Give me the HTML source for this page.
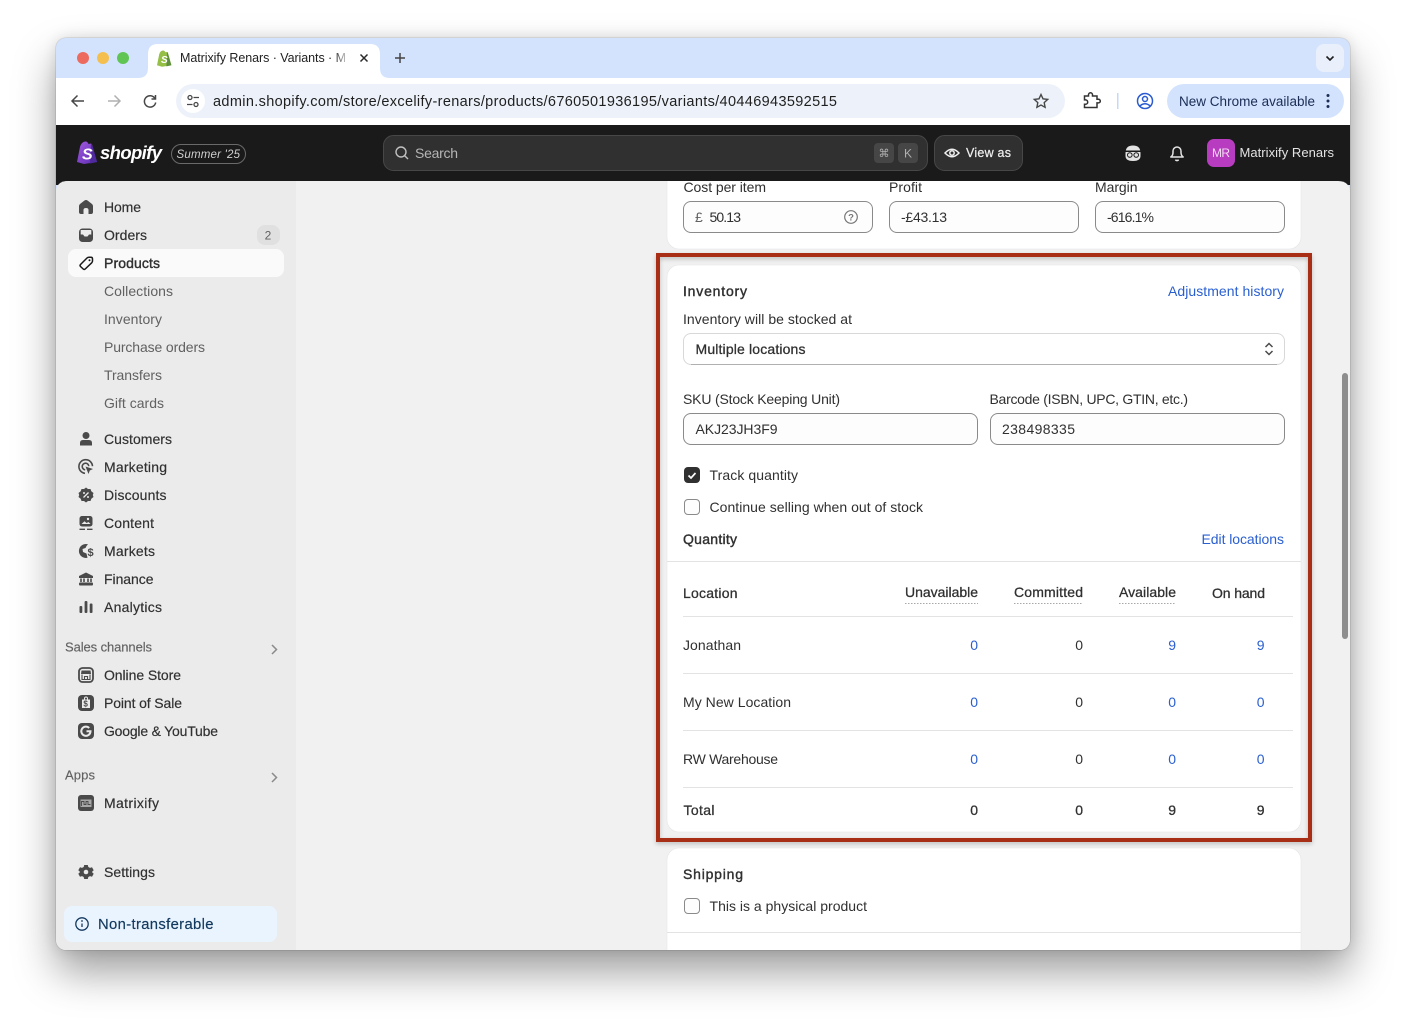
<!DOCTYPE html>
<html lang="en">
<head>
<meta charset="utf-8">
<title>Matrixify Renars · Variants</title>
<style>
html,body{margin:0;padding:0;background:#fff;width:1406px;height:1024px;overflow:hidden}
#win{position:absolute;left:56px;top:38px;width:1294px;height:912px;border-radius:10px;background:#d3e3fd;box-shadow:0 22px 42px rgba(0,0,0,.38),0 0 14px rgba(0,0,0,.12),0 0 1px rgba(0,0,0,.5)}
svg{position:absolute;left:0;top:0;display:block}
text{font-family:"Liberation Sans",sans-serif;font-size:14px;fill:#303030}
.m{stroke:#303030;stroke-width:.28px}
.nav{fill:#303030;stroke:#303030;stroke-width:.18px}
.sub{fill:#616161}
.sec{fill:#616161;font-size:13px;stroke:#616161;stroke-width:.15px}
.l{fill:#2a5fd0}
.h{stroke:#303030;stroke-width:.4px}
.i{fill:#4a4a4a}
.in{fill:#fdfdfd;stroke:#8a8a8a;stroke-width:1}
.d{stroke:#e3e3e3;stroke-width:1}
.n{text-anchor:end}
</style>
</head>
<body>
<div id="win"></div>
<svg width="1406" height="1024" viewBox="0 0 1406 1024" xmlns="http://www.w3.org/2000/svg">
<defs>
<clipPath id="w"><rect x="56" y="38" width="1294" height="912" rx="10"/></clipPath>
<clipPath id="main"><path d="M56 950V193Q56 181 68 181H1338Q1350 181 1350 193V950Z"/></clipPath>
<linearGradient id="fade" x1="0" x2="1"><stop offset="0" stop-color="#fff" stop-opacity="0"/><stop offset="1" stop-color="#fff"/></linearGradient>
<linearGradient id="purple" x1="0" y1="0" x2="1" y2="1"><stop offset="0" stop-color="#a45be0"/><stop offset="1" stop-color="#5a2ab0"/></linearGradient>
<filter id="sh" x="-5%" y="-5%" width="110%" height="110%"><feDropShadow dx="0" dy="2" stdDeviation="2" flood-color="#000" flood-opacity=".22"/></filter>
</defs>
<g clip-path="url(#w)">
<!-- tab strip -->
<rect x="56" y="38" width="1294" height="40" fill="#d3e3fd"/>
<circle cx="83" cy="58" r="6" fill="#ec6a5e"/><circle cx="103" cy="58" r="6" fill="#f4bf4f"/><circle cx="123" cy="58" r="6" fill="#61c554"/>
<rect x="56" y="78" width="1294" height="47" fill="#fff"/>
<path d="M138 78Q148 78 148 68V54Q148 44 158 44H370Q380 44 380 54V68Q380 78 390 78Z" fill="#fff"/>
<g transform="translate(157,50.500) scale(.72)">
<path d="M3 5.500C4 2 6 0 8.500 0C10 0 11 1 11.500 2.500L14 2L15 3L20 20.500L7 22.500L0 20.500Z" fill="#95bf47"/>
<path d="M14 2L15 3L20 20.500L13 22Z" fill="#5e8e3e"/>
<text x="5.500" y="17.500" style="font-size:14px;font-weight:bold;font-style:italic;fill:#fff">S</text>
</g>
<text x="180" y="62" textLength="166" style="font-size:12.500px;fill:#1f1f1f">Matrixify Renars · Variants · M</text>
<rect x="334" y="46" width="16" height="28" fill="url(#fade)"/>
<path d="M360.500 54.500l7 7m0-7l-7 7" stroke="#2b2b2b" stroke-width="1.500" fill="none"/>
<path d="M395 58h10M400 53v10" stroke="#444" stroke-width="1.500" fill="none"/>
<rect x="1316" y="44" width="28" height="28" rx="8" fill="#e9f0fc"/>
<path d="M1326.500 56.500l3.500 3.500l3.500-3.500" stroke="#1f1f1f" stroke-width="1.600" fill="none"/>
<!-- toolbar -->
<path d="M84 101H72.500M77.500 95.500L72 101l5.500 5.500" stroke="#474747" stroke-width="1.500" fill="none"/>
<path d="M108 101H119.500M114.500 95.500L120 101l-5.500 5.500" stroke="#b0b0b0" stroke-width="1.500" fill="none"/>
<path d="M155 98.500A5.700 5.700 0 1 0 155.700 102.500M155.500 95v4h-4" stroke="#474747" stroke-width="1.500" fill="none"/>
<rect x="176" y="84" width="889" height="34" rx="17" fill="#edf2fa"/>
<circle cx="193" cy="101" r="12" fill="#fff"/>
<g stroke="#474747" stroke-width="1.300" fill="none"><circle cx="190" cy="97.500" r="2"/><path d="M193.500 97.500H199M187 104.500H192.500"/><circle cx="196" cy="104.500" r="2"/></g>
<text x="213" y="106" textLength="624" style="font-size:14.500px;fill:#1f1f1f">admin.shopify.com/store/excelify-renars/products/6760501936195/variants/40446943592515</text>
<path d="M1041 94.500l2 4.300 4.700.6-3.500 3.200 .9 4.700-4.100-2.300-4.100 2.300 .9-4.700-3.500-3.200 4.700-.6z" fill="none" stroke="#474747" stroke-width="1.400"/>
<path d="M1084.500 96h4v-1.200a2 2 0 0 1 4 0V96h4.500v3.300h1.500a1.800 1.800 0 0 1 0 3.600H1097v4.600h-12.500v-3.200h1a2 2 0 0 0 0-4.400h-1z" fill="none" stroke="#333" stroke-width="1.500"/>
<rect x="1117" y="93" width="1.500" height="16" fill="#c6d8f4"/>
<g stroke="#2a5bd0" stroke-width="1.500" fill="none"><circle cx="1145" cy="101" r="7.500"/><circle cx="1145" cy="99" r="2.500"/><path d="M1139.800 106q5.200-4.500 10.400 0"/></g>
<rect x="1167" y="84" width="177" height="34" rx="17" fill="#d3e3fd"/>
<text x="1179" y="106" textLength="136" style="font-size:13.500px;fill:#1a2d55">New Chrome available</text>
<g fill="#1a2d55"><circle cx="1328" cy="95.500" r="1.500"/><circle cx="1328" cy="101" r="1.500"/><circle cx="1328" cy="106.500" r="1.500"/></g>
<!-- header -->
<rect x="56" y="125" width="1294" height="60" fill="#1a1a1a"/>
<g transform="translate(77,141.500)">
<path d="M3 5.500C4 2 6 0 8.500 0C10 0 11 1 11.500 2.500L14 2L15 3L20 20.500L7 22.500L0 20.500Z" fill="url(#purple)"/>
<path d="M14 2L15 3L20 20.500L13 22Z" fill="#4f2a9e"/>
<text x="5" y="18" style="font-size:16px;font-weight:bold;font-style:italic;fill:#fff">S</text>
</g>
<text x="100" y="159" textLength="62" style="font-size:18.500px;font-weight:bold;font-style:italic;fill:#fff">shopify</text>
<rect x="171.500" y="144.500" width="74" height="19" rx="9.500" fill="none" stroke="#6a6a6a"/>
<text x="176.500" y="158" textLength="63.500" style="font-size:11.500px;font-style:italic;fill:#d0d0d0">Summer '25</text>
<rect x="383.500" y="135.500" width="544" height="35" rx="10" fill="#303030" stroke="#474747"/>
<g stroke="#c0c0c0" stroke-width="1.400" fill="none"><circle cx="401" cy="152" r="5"/><path d="M404.700 155.700l3.300 3.300"/></g>
<text x="415" y="158" textLength="43" style="font-size:14px;fill:#b5b5b5">Search</text>
<rect x="874" y="143" width="20" height="20" rx="4" fill="#464646"/><rect x="898" y="143" width="20" height="20" rx="4" fill="#464646"/>
<text x="884" y="157" text-anchor="middle" style="font-size:11px;fill:#b0b0b0;font-family:'DejaVu Sans',sans-serif">⌘</text>
<text x="908" y="157.500" text-anchor="middle" style="font-size:12px;fill:#b0b0b0">K</text>
<rect x="934.500" y="135.500" width="88" height="35" rx="10" fill="#303030" stroke="#474747"/>
<g stroke="#f0f0f0" stroke-width="1.500" fill="none"><path d="M945 153q7-7.500 14 0q-7 7.500-14 0z"/><circle cx="952" cy="153" r="2.200"/></g>
<text x="966" y="157" textLength="45" style="font-size:12.500px;fill:#f0f0f0;stroke:#f0f0f0;stroke-width:.2px">View as</text>
<g>
<path d="M1125.500 153q0-7.500 7.500-7.500t7.500 7.500v3q0 5-7.500 5t-7.500-5z" fill="#e3e3e3"/>
<rect x="1125.500" y="150.500" width="15" height="1.500" fill="#1a1a1a"/>
<circle cx="1129.800" cy="155" r="2.300" fill="#e3e3e3" stroke="#1a1a1a" stroke-width="1"/><circle cx="1136.200" cy="155" r="2.300" fill="#e3e3e3" stroke="#1a1a1a" stroke-width="1"/>
</g>
<g fill="none" stroke="#e3e3e3" stroke-width="1.500"><path d="M1170.800 157q2.200-1.500 2.200-4.500v-1.500a4 4 0 0 1 8 0v1.500q0 3 2.200 4.500z" stroke-linejoin="round"/><path d="M1175.300 159.800q1.700 1.500 3.400 0"/></g>
<rect x="1207" y="139" width="28" height="28" rx="7" fill="#b83cbf"/>
<text x="1212" y="157" textLength="18" style="font-size:12px;fill:#f3d9f4">MR</text>
<text x="1239.500" y="157" textLength="94.500" style="font-size:13px;fill:#e3e3e3">Matrixify Renars</text>
<!-- main -->
<g clip-path="url(#main)">
<rect x="56" y="181" width="1294" height="769" fill="#f1f1f1"/>
<rect x="56" y="181" width="240" height="769" fill="#ebebeb"/>
<!-- content cards -->
<rect x="667" y="150" width="634" height="99" rx="12" fill="#fff" stroke="#e6e6e6" stroke-width=".6"/>
<text x="683.500" y="192" textLength="82.500">Cost per item</text>
<text x="889" y="192" textLength="33">Profit</text>
<text x="1095" y="192" textLength="42.500">Margin</text>
<rect class="in" x="683.500" y="201.500" width="189" height="31" rx="7.500"/>
<rect class="in" x="889.500" y="201.500" width="189" height="31" rx="7.500"/>
<rect class="in" x="1095.500" y="201.500" width="189" height="31" rx="7.500"/>
<text x="695" y="222" style="fill:#616161">£</text>
<text x="709.500" y="222" textLength="31.500">50.13</text>
<g fill="none" stroke="#777" stroke-width="1.200"><circle cx="851" cy="217" r="6.300"/></g>
<text x="851" y="220.500" text-anchor="middle" style="font-size:9.500px;fill:#777;font-weight:bold">?</text>
<text x="901" y="222" textLength="46">-£43.13</text>
<text x="1107" y="222" textLength="47">-616.1%</text>
<!-- highlight frame -->
<rect x="658" y="255" width="652" height="585" fill="none" stroke="#a82d19" stroke-width="4" filter="url(#sh)"/>
<!-- inventory card -->
<rect x="667" y="265" width="634" height="567" rx="12" fill="#fff" stroke="#e6e6e6" stroke-width=".6"/>
<text class="h" x="683" y="296" textLength="64">Inventory</text>
<text class="l" x="1168" y="296" textLength="116">Adjustment history</text>
<text x="683" y="324" textLength="169">Inventory will be stocked at</text>
<rect x="683.500" y="333.500" width="601" height="31" rx="7.500" fill="#fff" stroke="#d8d8d8"/>
<path d="M691 364.500H1277" stroke="#b0b0b0"/>
<text class="m" x="695.500" y="354" textLength="110">Multiple locations</text>
<path d="M1265.500 347l3.500-3.500 3.500 3.500M1265.500 351l3.500 3.500 3.500-3.500" fill="none" stroke="#4a4a4a" stroke-width="1.500"/>
<text x="683" y="404" textLength="157">SKU (Stock Keeping Unit)</text>
<text x="989.500" y="404" textLength="198.500">Barcode (ISBN, UPC, GTIN, etc.)</text>
<rect class="in" x="683.500" y="413.500" width="294" height="31" rx="7.500"/>
<rect class="in" x="990.500" y="413.500" width="294" height="31" rx="7.500"/>
<text x="695.500" y="434" textLength="82">AKJ23JH3F9</text>
<text x="1002" y="434" textLength="73">238498335</text>
<rect x="684" y="467" width="16" height="16" rx="4" fill="#303030"/>
<path d="M688.500 475.500l2.500 2.500 4.500-5" fill="none" stroke="#fff" stroke-width="1.700"/>
<text x="709.500" y="480" textLength="88.500">Track quantity</text>
<rect x="684.500" y="499.500" width="15" height="15" rx="3.500" fill="#fdfdfd" stroke="#8a8a8a"/>
<text x="709.500" y="512" textLength="213.500">Continue selling when out of stock</text>
<text class="h" x="683" y="544" textLength="54">Quantity</text>
<text class="l" x="1201.500" y="544" textLength="82.500">Edit locations</text>
<path class="d" d="M667 561.500H1301"/>
<text class="m" x="683" y="598" textLength="54.500">Location</text>
<text class="m" x="905" y="597" textLength="73">Unavailable</text>
<text class="m" x="1014" y="597" textLength="69">Committed</text>
<text class="m" x="1119" y="597" textLength="57">Available</text>
<text class="m" x="1212" y="598" textLength="53">On hand</text>
<g stroke="#a8a8a8" stroke-width="1" stroke-dasharray="1.500 1.500"><path d="M905 603.500H978M1014 603.500H1083M1119 603.500H1176"/></g>
<path class="d" d="M683 616.500H1293M683 673.500H1293M683 730.500H1293M683 787.500H1293"/>
<text x="683" y="650" textLength="58">Jonathan</text>
<text class="l n" x="978" y="650">0</text><text class="n" x="1083" y="650">0</text><text class="l n" x="1176" y="650">9</text><text class="l n" x="1264.500" y="650">9</text>
<text x="683" y="707" textLength="108">My New Location</text>
<text class="l n" x="978" y="707">0</text><text class="n" x="1083" y="707">0</text><text class="l n" x="1176" y="707">0</text><text class="l n" x="1264.500" y="707">0</text>
<text x="683" y="764" textLength="95">RW Warehouse</text>
<text class="l n" x="978" y="764">0</text><text class="n" x="1083" y="764">0</text><text class="l n" x="1176" y="764">0</text><text class="l n" x="1264.500" y="764">0</text>
<text class="m" x="683.500" y="815" textLength="31">Total</text>
<text class="m n" x="978" y="815">0</text><text class="m n" x="1083" y="815">0</text><text class="m n" x="1176" y="815">9</text><text class="m n" x="1264.500" y="815">9</text>
<!-- shipping card -->
<rect x="667" y="848" width="634" height="130" rx="12" fill="#fff" stroke="#e6e6e6" stroke-width=".6"/>
<text class="h" x="683" y="879" textLength="60">Shipping</text>
<rect x="684.500" y="898.500" width="15" height="15" rx="3.500" fill="#fdfdfd" stroke="#8a8a8a"/>
<text x="709.500" y="911" textLength="157.500">This is a physical product</text>
<path class="d" d="M667 932.500H1301"/>
<!-- scrollbar -->
<rect x="1342" y="373" width="6" height="266" rx="3" fill="#8e8e8e"/>
<!-- sidebar -->
<rect x="68" y="249" width="216" height="28" rx="8" fill="#fafafa"/>
<rect x="257" y="225" width="23" height="20" rx="8" fill="#e0e0e0"/>
<text x="268" y="239.500" text-anchor="middle" style="font-size:12px;fill:#616161">2</text>
<text class="nav" x="104" y="212" textLength="37">Home</text>
<text class="nav" x="104" y="240" textLength="43">Orders</text>
<text class="h" x="104" y="268" textLength="56">Products</text>
<text class="sub" x="104" y="296" textLength="69">Collections</text>
<text class="sub" x="104" y="324" textLength="58">Inventory</text>
<text class="sub" x="104" y="352" textLength="101">Purchase orders</text>
<text class="sub" x="104" y="380" textLength="58">Transfers</text>
<text class="sub" x="104" y="408" textLength="60">Gift cards</text>
<text class="nav" x="104" y="444" textLength="68">Customers</text>
<text class="nav" x="104" y="472" textLength="63">Marketing</text>
<text class="nav" x="104" y="500" textLength="62.500">Discounts</text>
<text class="nav" x="104" y="528" textLength="50">Content</text>
<text class="nav" x="104" y="556" textLength="51">Markets</text>
<text class="nav" x="104" y="584" textLength="49.500">Finance</text>
<text class="nav" x="104" y="612" textLength="58">Analytics</text>
<text class="sec" x="65" y="651.500" textLength="87">Sales channels</text>
<path d="M272 645l4.500 4.500-4.500 4.500" fill="none" stroke="#8a8a8a" stroke-width="1.500"/>
<text class="nav" x="104" y="680" textLength="77">Online Store</text>
<text class="nav" x="104" y="708" textLength="78">Point of Sale</text>
<text class="nav" x="104" y="736" textLength="114">Google &amp; YouTube</text>
<text class="sec" x="65" y="779.500" textLength="30">Apps</text>
<path d="M272 773l4.500 4.500-4.500 4.500" fill="none" stroke="#8a8a8a" stroke-width="1.500"/>
<text class="nav" x="104" y="808" textLength="55">Matrixify</text>
<text class="nav" x="104" y="877" textLength="51">Settings</text>
<rect x="64" y="906" width="213" height="36" rx="8" fill="#eaf4ff"/>
<g fill="none" stroke="#13395e" stroke-width="1.300"><circle cx="82" cy="924" r="6.200"/><path d="M82 923.500v3.500"/></g><circle cx="82" cy="921" r=".9" fill="#13395e"/>
<text x="98" y="929" textLength="115.500" style="font-size:14.800px;fill:#13395e;stroke:#13395e;stroke-width:.2px">Non-transferable</text>
<!-- sidebar icons -->
<path class="i" transform="translate(86,207)" d="M-7-1Q-7-2-6-3L-1.500-6.500Q0-7.500 1.500-6.500L6-3Q7-2 7-1V5Q7 7 5 7H2.500V3Q2.500 1 0 1T-2.500 3V7H-5Q-7 7-7 5Z"/>
<g transform="translate(86,235)"><rect class="i" x="-7" y="-6.500" width="14" height="13.500" rx="3.500"/><path d="M-5.300-5H5.300V-.5H3L1.500 1.500H-1.500L-3-.5H-5.300Z" fill="#ebebeb"/></g>
<path transform="translate(86,263)" d="M-5.500 1.500L1-5Q1.800-5.800 3-5.800H5Q6.500-5.800 6.500-4V-2Q6.500-1 5.700-.2L-.8 6Q-1.800 7-2.800 6L-5.500 3.500Q-6.500 2.500-5.500 1.500Z" fill="none" stroke="#1a1a1a" stroke-width="1.500"/>
<circle cx="3.500" cy="-2.800" r="1" transform="translate(86,263)" fill="#1a1a1a"/>
<g transform="translate(86,439)"><circle class="i" cy="-3.500" r="3.500"/><path class="i" d="M-6 6.500V4Q-6 1-3 1H3Q6 1 6 4V6.500Z"/></g>
<g transform="translate(86,467)" fill="none" stroke="#4a4a4a" stroke-width="1.600"><path d="M-1 6.300A6.800 6.800 0 1 1 6.500-.8"/><path d="M-.8 2.800A3.300 3.300 0 1 1 2.800-.8"/><path d="M-.5-.5L7 2 3.800 3.500 2.500 7Z" fill="#4a4a4a" stroke="none"/></g>
<g transform="translate(86,495)"><path class="i" d="M0-7.500L2-6 4.500-6 5.300-3.700 7.500-2 6.800 0 7.500 2 5.300 3.700 4.500 6 2 6 0 7.500-2 6-4.500 6-5.300 3.700-7.500 2-6.800 0-7.500-2-5.300-3.700-4.500-6-2-6Z"/><path d="M-2.500 2.500L2.500-2.500" stroke="#ebebeb" stroke-width="1.300"/><circle cx="-2" cy="-2" r="1" fill="#ebebeb"/><circle cx="2" cy="2" r="1" fill="#ebebeb"/></g>
<g transform="translate(86,523)"><rect class="i" x="-6.500" y="-7" width="13" height="10.500" rx="2.500"/><path d="M-4.500 1L-1.500-1.800.5 0 2.500-1 4.500 1Z" fill="#ebebeb"/><circle cx="2" cy="-4" r="1.200" fill="#ebebeb"/><path d="M-6.500 6.300H-1M1 6.300H6.500" stroke="#4a4a4a" stroke-width="1.300"/></g>
<g transform="translate(86,551)"><path class="i" d="M2-6.700A7 7 0 1 0 1.500 6.800L.5 2.500-3 1-3.500-2-.5-3 .5-5Z"/><text x="1.500" y="5" style="font-size:11px;font-weight:bold;fill:#4a4a4a">$</text></g>
<g transform="translate(86,579)"><path class="i" d="M0-6.500L7-3V-1H-7V-3Z"/><path d="M-5-.5V3M-2-.5V3M2-.5V3M5-.5V3" stroke="#4a4a4a" stroke-width="1.600"/><rect class="i" x="-7" y="3.500" width="14" height="3" rx="1"/></g>
<g transform="translate(86,607)" fill="#4a4a4a"><rect x="-6.500" y="-1" width="2.800" height="7" rx="1"/><rect x="-1.400" y="-6" width="2.800" height="12" rx="1"/><rect x="3.700" y="-3.500" width="2.800" height="9.500" rx="1"/></g>
<g transform="translate(86,675)"><rect x="-7" y="-7" width="14" height="14" rx="3.500" fill="none" stroke="#4a4a4a" stroke-width="1.800"/><path class="i" d="M-4.500-4.500H4.500L5-1H-5Z"/><path d="M-4-.5V4.500H4V-.5M-1.500 4.500V1.500H1.500V4.500" fill="none" stroke="#4a4a4a" stroke-width="1.100"/></g>
<g transform="translate(86,703)"><rect class="i" x="-8" y="-8" width="16" height="16" rx="4"/><path d="M-4-3.500H4V5H-4Z" fill="#ebebeb"/><text x="-2.700" y="3.500" style="font-size:8px;font-weight:bold;fill:#4a4a4a">$</text><path d="M-1.500-3.500V-4.500A1.500 1.500 0 0 1 1.500-4.500V-3.500" fill="none" stroke="#ebebeb"/></g>
<g transform="translate(86,731)"><rect class="i" x="-8" y="-8" width="16" height="16" rx="4"/><path d="M3.200-3A4.600 4.600 0 1 0 4.500 .3H.5" fill="none" stroke="#ebebeb" stroke-width="2"/></g>
<g transform="translate(86,803)"><rect class="i" x="-8" y="-8" width="16" height="16" rx="3"/><rect x="-5.500" y="-3.500" width="11" height="7.500" fill="#a8a8a8"/><path d="M-4.500 3V-1.500H-2V1.500H0V-1.500H2V1.500H4.500" fill="none" stroke="#4a4a4a" stroke-width=".9"/></g>
<g transform="translate(86,872)"><path class="i" d="M-1.800-7H1.800L2.300-5 4-4.100 6-4.800 7.700-1.700 6.200-.4V.4L7.700 1.700 6 4.800 4 4.100 2.300 5 1.800 7H-1.800L-2.300 5-4 4.100-6 4.800-7.700 1.700-6.200.4V-.4L-7.700-1.700-6-4.800-4-4.100-2.300-5Z"/><circle r="2.300" fill="#ebebeb"/></g>
</g>
</g>
</svg>
</body>
</html>
